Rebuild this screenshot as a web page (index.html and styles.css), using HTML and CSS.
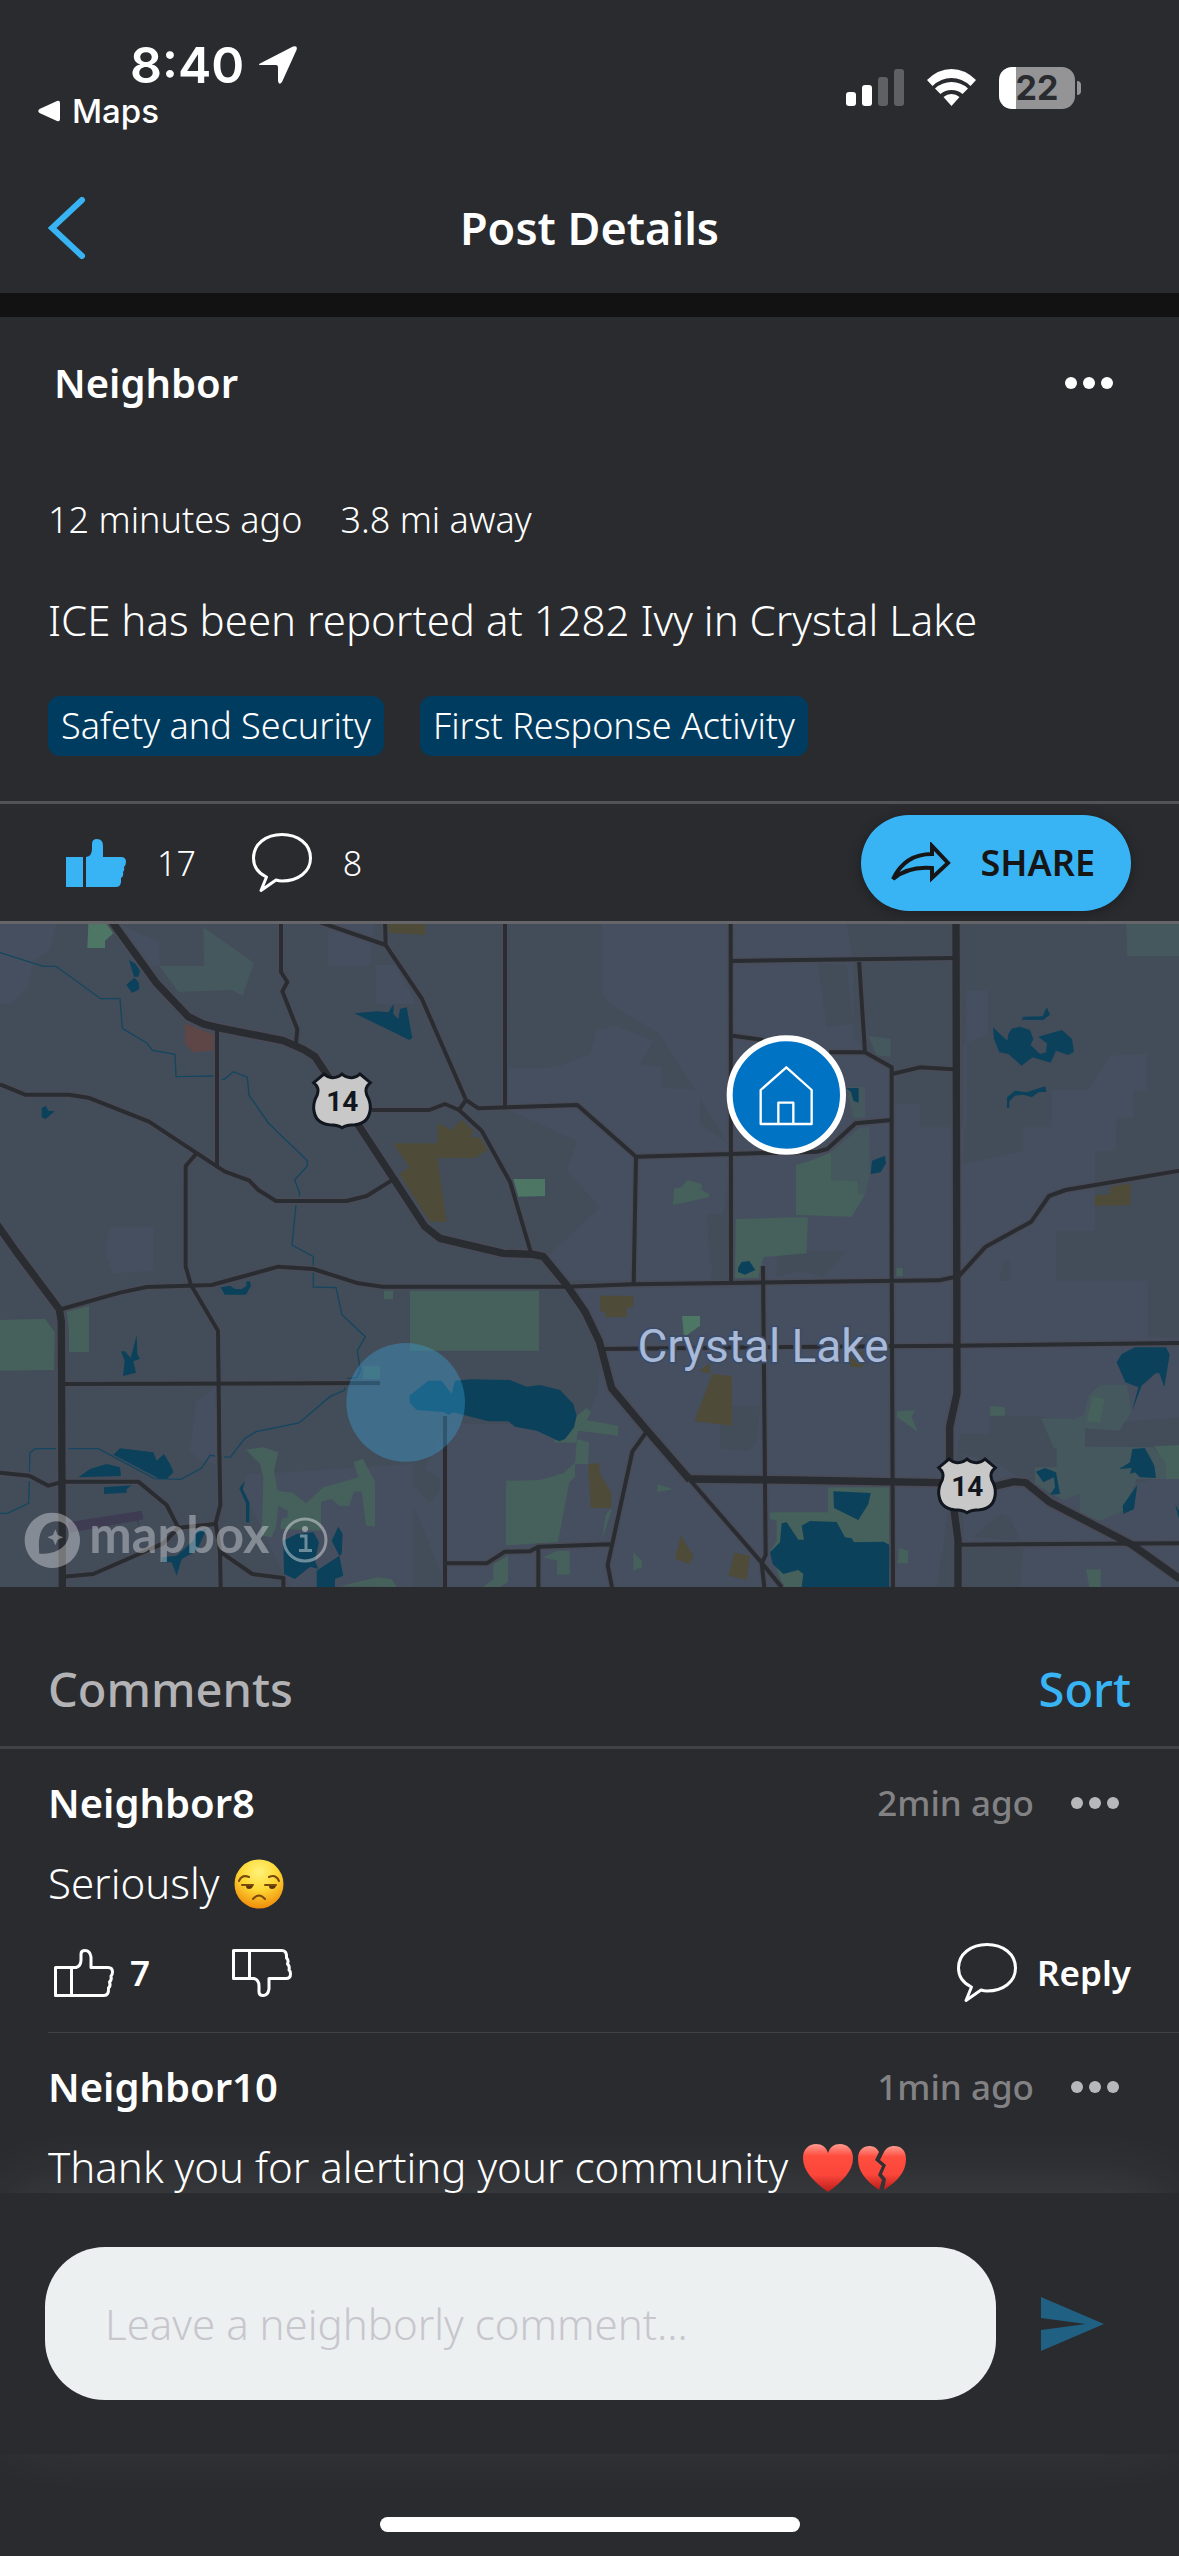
FILE: index.html
```html
<!DOCTYPE html>
<html lang="en">
  <head>
    <meta charset="UTF-8" />
    <meta name="viewport" content="width=device-width, initial-scale=1.0" />
    <title>Post Details</title>
    <link rel="stylesheet" href="styles.css">
  </head>
  <body>
    <!-- shared icons -->
    <svg class="sprite" aria-hidden="true">
      <symbol id="thumb" viewBox="0 0 60 48">
        <path d="M1.5 18.500H17.500V46.500H1.500Z M17.500 18.500H22Q27 17 27 11V5Q27 1.500 31 1.500Q36 1.500 37 8V18.500H54Q58.500 18.500 58.500 23Q58.500 26 57 27Q58 31 55.500 33Q57 37 54.500 39Q55 46.500 50 46.500H17.500"/>
      </symbol>
      <symbol id="bubble" viewBox="0 0 60 60">
        <path d="M30 1.500C46 1.500 58.500 11 58.500 25C58.500 39 46 48 30 48Q27 48 24 47L9 57.500L14.500 44C6 40 1.500 33 1.500 25C1.500 11 14 1.500 30 1.500Z"/>
      </symbol>
      <symbol id="dots" viewBox="0 0 50 14">
        <circle cx="7" cy="7" r="6"/><circle cx="25" cy="7" r="6"/><circle cx="43" cy="7" r="6"/>
      </symbol>
      <symbol id="shield" viewBox="-95 -95 190 190">
        <path d="M-54-78Q-42-66-28-67Q-10-68 0-78Q10-68 28-67Q42-66 54-78L85-52Q66-36 74-16Q86 5 85 25Q82 70 38 74Q14 74 0 83Q-14 74-38 74Q-82 70-85 25Q-86 5-74-16Q-66-36-85-52Z"/>
      </symbol>
    </svg>

    <div class="app">
      <div class="status-bar">
        <div class="status-left">
          <div class="clock">
            <span>8:40</span>
            <svg width="40" height="40" viewBox="0 0 40 40"><path d="M2 18.500L35 1.500Q40 0 38.500 5L24 37Q21 41 20 36V22Q20 20 18 20H4Q-1 20 2 18.500Z"/></svg>
          </div>
          <a class="back-app" href="#maps">
            <svg width="22" height="22" viewBox="0 0 22 22"><path d="M1.500 9L19 1Q22 0 22 3V19Q22 22 19 21L1.500 13Q-1 11 1.500 9Z"/></svg>
            Maps
          </a>
        </div>
        <div class="status-right">
          <svg width="58" height="40" viewBox="0 0 58 40">
            <rect x="0" y="24" width="10" height="14" rx="3"/>
            <rect x="16" y="17" width="10" height="21" rx="3"/>
            <rect class="dim" x="32" y="9" width="10" height="29" rx="3"/>
            <rect class="dim" x="48" y="1" width="10" height="37" rx="3"/>
          </svg>
          <svg width="51" height="40" viewBox="0 0 51 40">
            <path d="M1 12Q12 1 25.500 1T50 12L44.500 18Q36 10 25.500 10T6.500 18Z"/>
            <path d="M9 20.500Q16 14 25.500 14T42 20.500L36.500 26Q32 22 25.500 22T14.500 26Z"/>
            <path d="M17.500 29Q21 26 25.500 26T33.500 29L25.500 38Z"/>
          </svg>
          <div class="battery"><span>22</span></div>
        </div>
      </div>

      <header class="nav">
        <button class="icon-btn" aria-label="Back">
          <svg width="38" height="62" viewBox="0 0 38 62"><path d="M34 3L4 31L34 59"/></svg>
        </button>
        <h1>Post Details</h1>
      </header>

      <main class="content">
        <article class="post">
          <div class="post-header">
            <h2 class="author">Neighbor</h2>
            <button class="icon-btn more" aria-label="Post options"><svg width="50" height="14"><use href="#dots"/></svg></button>
          </div>
          <div class="meta"><span>12 minutes ago</span><span>3.8 mi away</span></div>
          <p class="text">ICE has been reported at 1282 Ivy in Crystal Lake</p>
          <div class="tags"><span class="tag">Safety and Security</span><span class="tag">First Response Activity</span></div>
        </article>

        <div class="post-actions">
          <button class="icon-btn count liked">
            <svg width="60" height="48" viewBox="0 0 60 48"><path d="M0 18H17V48H0Z M20 18Q26 17 26 10V5Q26 0 31 0Q37 0 37 7V18H55Q60 18 60 23Q60 26 58 28Q59 31 57 33Q58 37 55 39Q56 48 50 48H20Z"/></svg>
            <span>17</span>
          </button>
          <button class="icon-btn count">
            <svg class="line" width="60" height="60"><use href="#bubble"/></svg>
            <span>8</span>
          </button>
          <button class="share">
            <svg width="60" height="42" viewBox="0 0 60 42"><path d="M2 37Q14 12 41 12V4L57 21L41 36V26Q17 24 2 37Z"/></svg>
            SHARE
          </button>
        </div>

        <section class="map" aria-label="Map of Crystal Lake">
          <svg class="map-canvas" viewBox="0 0 3537 1989" preserveAspectRatio="xMidYMid slice">
            <!-- built-up areas -->
            <g class="built">
              <path d="M0 0H170L150 80L100 110L85 190L30 240H0Z M360 0L420 30L478 50V125H400Z M985 0H1120L1110 125H985Z M1128 123H1185L1240 220V240H1128Z"/>
              <path d="M330 910H460V1040L340 1048L315 980Z M1806 0H2190V760L2130 1070H1700L1640 1000L1800 850L1700 740L1730 650L1510 550V432H1625L1682 425L1770 390L1790 320L1850 305L1960 350L1920 420L1985 430V490L2100 500V600L2185 660L1980 330L1830 240L1806 210Z"/>
              <path d="M2200 0H2540L2560 110V340L2675 440V1989H1340L1230 1720L1340 1500L1750 1500L1795 1400L1800 1270L1700 1090H2200Z"/>
              <path d="M2687 540H2760V610H2900V200H2964V330L2890 360V720L2940 710L3070 680V610H3155V498H3265L3330 395L3440 390V500H3400V580H3350V680H3285V920H3170V1070H3445V1240H3537V1480L3300 1500L3100 1475H2970V1530H2880L2810 1989H2687Z"/>
              <path d="M2890 1590L3000 1620L3150 1730L3537 1650V1989H3050L3070 1880L2890 1870Z M590 1430L650 1390V1620L600 1610L570 1580Z M740 1650L860 1645L1240 1620V1989H870L730 1700Z"/>
            </g>
            <g class="open">
              <path d="M2455 120H2540L2560 300L2480 310Z M2660 180H2860V420L2680 430Z M2120 870H2190V1040L2130 1020Z M2330 980H2540L2470 1060L2400 1040L2330 1060Z M3010 1010H3030V1070H2998Z M2160 1445H2280L2270 1560L2240 1580L2160 1575Z M2920 1840L3000 1770L3030 1780L3060 1850Z M2890 1870H3070L3060 1989H2930Z M1250 1625L1320 1660V1700L1290 1740L1248 1690Z"/>
            </g>
            <!-- parks -->
            <g class="park">
              <path class="soft" d="M610 10L762 116L728 215L695 198L535 204L478 126H612Z"/>
              <path class="bright" d="M262 72L265 0H320L340 28L315 50V72Z M1540 765H1635V816L1555 818Z M2046 1176H2100V1205L2052 1240Z"/>
              <path d="M2019 843L2022 793L2045 790L2062 768L2105 780V797L2127 810V820Z"/>
              <path d="M2207 885L2390 880H2424L2420 988L2290 1000L2275 1062H2205Z M2388 723L2430 710L2495 685V768L2572 770L2578 808L2595 812L2555 878L2388 873Z"/>
              <path class="soft" d="M2495 683L2580 610L2607 610L2610 750L2595 812H2575V768H2495Z M2545 490H2595V580L2560 582L2540 500Z M2605 336L2672 345V398L2630 394Z M3378 0H3537V96H3382Z"/>
              <path d="M0 1188L135 1184L164 1225L162 1338L0 1340Z M200 1163L267 1145V1284H207V1220Z M1152 1100H1179V1125H1152Z M1090 1325H1140V1365H1090Z M1230 1100H1617V1280H1230Z"/>
              <path d="M738 1577L790 1570L835 1585L822 1640L833 1700L878 1706L918 1738L970 1690L1075 1660L1060 1615L1088 1604L1125 1672V1808L1098 1805L1085 1703H1062L1048 1746H1020L993 1725L963 1735V1820L840 1815L845 1785L863 1780V1760L835 1745L828 1810L815 1840L785 1835L790 1660L780 1620Z M1020 1987L1130 1960L1175 1965L1190 1989Z"/>
              <path d="M1518 1670L1620 1668L1690 1648L1725 1615V1660L1708 1675L1674 1855L1518 1864Z M1730 1545L1767 1555L1765 1620H1725Z M1660 1555L1730 1475L1760 1452L1773 1465L1760 1488L1854 1505V1535L1735 1520L1728 1556Z M1838 1750L1805 1848L1818 1770Z M1480 1920L1524 1895V1975L1500 1989H1450L1480 1965Z M1630 1900L1671 1880H1709V1952H1671V1910Z M1900 1885L1926 1910V1930L1900 1940Z M1972 1680L2020 1696L1972 1704Z"/>
              <path d="M2310 1765H2484V1690H2667V1870L2670 1989H2350L2310 1880L2330 1850V1790L2310 1785Z M2689 1032H2708V1056H2689Z M2691 1462L2745 1458L2735 1480L2754 1524L2691 1480Z M2697 1872L2724 1880V1918H2693Z M3258 1936H3302V1989H3268Z M2970 1446L3015 1450V1475H2970Z M3462 1567L3537 1563V1665H3497L3495 1620Z"/>
              <path class="soft" d="M3123 1482L3225 1485L3255 1470L3265 1415L3300 1382H3380L3396 1462L3358 1520L3255 1513V1568L3460 1570L3498 1620V1665H3410L3370 1760L3300 1790L3240 1770L3240 1710L3190 1728L3105 1680V1630H3170V1575L3160 1570Z"/>
              <path d="M3278 1415L3314 1425L3300 1496L3260 1492Z"/>
            </g>
            <path class="red" d="M555 298L610 320L640 330V380L578 384L555 360Z"/>
            <path class="purple" d="M205 1795L425 1760L430 1785L415 1790L420 1815L410 1790L210 1826Z"/>
            <g class="olive">
              <path d="M1165 0H1276V33L1165 26Z M1178 658H1313V598L1355 618L1385 587L1420 620L1412 640L1440 640L1463 678L1425 702H1312L1340 893H1290L1198 750L1228 728Z"/>
              <path d="M1800 1115H1900V1147L1880 1153V1180H1815V1163L1800 1162Z M2097 1340L2130 1318V1350Z M2137 1350L2194 1356L2196 1505L2083 1492Z M1765 1620L1797 1617L1800 1650L1834 1705V1752H1772Z M2042 1835L2081 1895L2068 1920L2025 1905Z M2203 1886L2250 1895L2240 1967L2185 1955Z"/>
              <path d="M3284 815L3330 810L3332 788L3392 778V843L3284 846Z M2555 1290L2590 1280V1330L2550 1328Z"/>
            </g>
            <!-- rivers and lakes -->
            <g class="stream">
              <path d="M0 86L130 127H168L302 224H360L367 313L440 357L458 379L525 391L528 458L640 456 M665 466H673L700 443L742 460L747 513L805 597L922 710V726L884 768L899 808L897 818 M888 843L876 963L940 998V1089L1008 1091L1026 1172L1096 1238L1072 1280L1081 1340L1070 1360L1042 1364"/>
              <path d="M1034 1390V1398L990 1418L897 1497L768 1523L735 1543L690 1600L672 1598 M645 1596L630 1594L605 1632L543 1666L463 1664L295 1574H205 M168 1574H105L90 1586L88 1643 M88 1671L86 1738L22 1768H0"/>
            </g>
            <g class="water">
              <path d="M387 108L405 118L420 140L415 158H402Z M379 182L403 161L416 175L418 196L396 207Z M125 552L137 545L145 560L164 562L137 585L125 580Z M1063 268L1130 262L1165 265L1181 240L1180 270L1195 285L1200 255L1220 250L1237 342L1228 348L1150 310Z"/>
              <path d="M1228 1415L1285 1370H1325L1355 1410L1365 1370L1415 1366L1530 1368L1580 1388L1620 1383L1680 1398L1720 1440L1730 1475L1722 1510L1695 1545L1678 1552L1610 1520L1545 1508L1525 1492H1465L1360 1465L1345 1472L1330 1464L1250 1458L1230 1436Z"/>
              <path d="M662 1090L690 1085L705 1095L725 1095L740 1085L738 1073L750 1072L753 1085L738 1112H674Z M410 1233L412 1290L420 1304L400 1312L408 1346L369 1356L374 1310L363 1282L375 1282L392 1302Z M340 1592L360 1573L460 1585L470 1610L492 1590L510 1620L521 1645L500 1664H478Z M235 1660L270 1635L320 1620L360 1630L363 1656Z M312 1690L395 1684L380 1695V1706L312 1710Z M735 1670L728 1695L748 1735V1795H738V1738L718 1693Z"/>
              <path d="M850 1850L890 1830L940 1825L957 1855L945 1910L955 1935L930 1928L885 1965L852 1950Z M950 1940L1018 1895L1030 1955L1005 1965V1989H950Z M1015 1808L1028 1830L1025 1890L1018 1895L995 1850Z M485 1900L530 1895L580 1850L590 1820L620 1815L590 1880L545 1905L530 1955L515 1915H485Z"/>
              <path d="M2979 310L3000 330L3022 350L3025 330L3035 314L3060 308L3090 318L3100 345L3092 363L3120 390L3138 385L3141 358L3114 338L3186 318L3216 345L3222 383L3205 393L3168 380L3152 416L3098 400L3065 425L3025 390L2998 385L2982 345Z M3065 287L3070 278L3128 277L3140 250L3150 272L3130 288Z M3021 552V520L3045 500L3080 505L3135 487L3140 503L3115 505L3095 520L3070 512L3045 515L3028 532V552Z M2538 492H2576V536L2560 530L2553 503Z M2616 710L2655 695L2658 718L2642 745L2612 750Z M2214 1032L2225 1014L2248 1011L2266 1038L2235 1052L2214 1044Z"/>
              <path d="M2500 1702L2612 1707L2605 1740L2575 1788L2502 1752Z M2345 1798L2360 1795L2395 1847H2412L2405 1805L2430 1791L2510 1794L2535 1840L2555 1843L2562 1855L2650 1853L2668 1862V1989H2405L2410 1950L2395 1938L2350 1950L2318 1920L2310 1885L2340 1855Z"/>
              <path d="M3350 1315L3365 1290L3405 1270H3498L3509 1292L3493 1390L3478 1348H3467L3425 1385L3396 1462L3415 1390L3376 1375Z M3357 1635L3390 1615L3397 1575L3434 1572L3450 1600L3463 1625L3468 1662L3420 1660L3405 1645L3390 1650L3395 1632Z M3412 1682L3402 1755L3370 1770L3368 1745Z M3108 1643L3135 1632L3168 1645L3180 1710L3150 1712L3165 1690L3162 1660L3130 1675Z M3526 1742L3537 1760V1785Z"/>
            </g>
            <!-- roads: halo pass, then surface -->
            <defs>
              <g id="roads">
                <path d="M0 481L75 512H207L265 521L447 593L655 730L675 743L747 769L775 798L828 831H1040L1100 816L1180 766 M651 310V730 M588 690L557 726V1028L573 1083L654 1220L658 1578L661 1743L647 1798L660 1883L662 1990"/>
                <path d="M843-12V144L862 174L847 202L892 316L888 358 M940-12L1157 63L1155-12 M1157 63L1170 83L1265 223L1398 528L1435 553L1732 543L1908 698L2192 690L2452 683L2482 675L2567 598L2677 588 M1908 698L1901 1078 M1115 558H1288L1335 540L1377 558L1398 528 M1377 558L1445 620L1530 773L1592 983 M1515-12V550 M2192-12L2193 1076"/>
                <path d="M2192 111L2862 102 M2198 335L2290 348 M2487 385H2595L2577 108 M2595 385L2675 430V1008L2679 1990 M2677 450L2759 430L2859 436 M3540 740L3197 798L3147 816L3094 893L2957 968L2877 1056L2817 1069L2337 1075L1900 1081L1700 1088H1148L1075 1078L940 1035L835 1028L635 1083L440 1089L360 1106L185 1155"/>
                <path d="M1810 1275L2370 1269L2867 1265L3540 1257 M2289 1026L2295 1678L2297 1893L2285 1918L2293 1990 M2070 1668L2285 1916L2345 1990 M1940 1523L1897 1583L1823 1923L1836 1990 M1830 1861L1615 1868L1590 1882L1515 1883L1460 1918H1335 M1335 1476V1990 M1615 1868V1990 M190 1380L1140 1377"/>
                <path d="M0 1646L88 1655L145 1685L190 1673H415L500 1743L535 1811L645 1800 M535 1811L490 1858L280 1950L190 1958 M660 1883L757 1950L850 1962V1990 M2877 1862L3540 1858"/>
              </g>
              <g id="highways">
                <path d="M330-15L470 178L565 278L610 300L650 310L850 350L910 376L945 398L985 458L1075 603L1170 748L1275 908L1320 943L1510 988L1600 991L1630 998L1700 1083L1755 1163L1798 1253L1835 1393L1940 1518L2070 1668"/>
                <path d="M2070 1665L2370 1668L2817 1676L2987 1686L3042 1673L3077 1676L3147 1733L3397 1863L3540 1965 M2868-10L2871 1408L2849 1508V1618L2862 1758L2874 1848V1990 M-10 900L45 978L178 1156L184 1193L187 1990"/>
              </g>
            </defs>
            <use class="halo" href="#roads"/>
            <use class="halo wide" href="#highways"/>
            <use class="road" href="#roads"/>
            <use class="road wide" href="#highways"/>

            <text class="city" x="2289" y="1315">Crystal Lake</text>
            <g class="route">
              <use href="#shield" x="931" y="433" width="190" height="190"/>
              <text x="1027" y="560">14</text>
              <use href="#shield" x="2806" y="1588" width="190" height="190"/>
              <text x="2902" y="1715">14</text>
            </g>
            <circle class="area" cx="1217" cy="1435" r="178"/>
            <g class="home">
              <circle cx="2359" cy="513" r="170"/>
              <path d="M2282 498L2359 430L2435 498V600H2282Z M2335 600V536H2380V600"/>
            </g>
            <!-- attribution -->
            <g class="brand">
              <path fill-rule="evenodd" d="M157 1766A83 83 0 1 1 156.900 1766Z M118 1889C112 1830 125 1795 168 1792C192 1792 206 1805 206 1830C206 1870 165 1892 118 1889Z"/>
              <path d="M166 1816L173 1833L190 1840L173 1847L166 1864L159 1847L142 1840L159 1833Z"/>
              <text x="268" y="1886">mapbox</text>
            </g>
          </svg>
          <button class="info" aria-label="Map information">
            <svg width="46" height="46" viewBox="0 0 46 46"><circle cx="23" cy="23" r="21"/><path d="M18 19H24V33 M17 33.500H30"/><circle class="tittle" cx="23" cy="12" r="3"/></svg>
          </button>
        </section>

        <section class="comments">
          <div class="comments-header">
            <h2>Comments</h2>
            <button class="sort">Sort</button>
          </div>

          <article class="comment">
            <div class="comment-header">
              <h3 class="author">Neighbor8</h3>
              <span class="time">2min ago</span>
              <button class="icon-btn more" aria-label="Comment options"><svg width="50" height="14"><use href="#dots"/></svg></button>
            </div>
            <p class="text">Seriously
              <svg class="emoji" viewBox="0 0 50 50" role="img" aria-label="unamused face">
                <defs><radialGradient id="face" cx=".5" cy=".25" r=".75"><stop offset="0" stop-color="#fff27a"/><stop offset=".5" stop-color="#fdd835"/><stop offset="1" stop-color="#f08c0a"/></radialGradient></defs>
                <circle cx="25" cy="25" r="24.500" fill="url(#face)"/>
                <path d="M5 22Q8 15 15 18 M35 18Q42 15 45 22 M8 26H19 M31 26H42 M19 40Q25 33 31 40" fill="none" stroke="#7a4a0c" stroke-width="2" stroke-linecap="round"/>
                <path d="M12 27H19Q18 30 15 30T12 27Z M35 27H42Q41 30 38 30T35 27Z" fill="#5c3608"/>
              </svg>
            </p>
            <div class="comment-actions">
              <button class="icon-btn vote"><svg class="line" width="60" height="48"><use href="#thumb"/></svg><span>7</span></button>
              <button class="icon-btn vote down" aria-label="Dislike"><svg class="line" width="60" height="48"><use href="#thumb"/></svg></button>
              <button class="icon-btn reply"><svg class="line" width="60" height="60"><use href="#bubble"/></svg><span>Reply</span></button>
            </div>
          </article>

          <article class="comment">
            <div class="comment-header">
              <h3 class="author">Neighbor10</h3>
              <span class="time">1min ago</span>
              <button class="icon-btn more" aria-label="Comment options"><svg width="50" height="14"><use href="#dots"/></svg></button>
            </div>
            <p class="text">Thank you for alerting your community
              <svg class="emoji" viewBox="0 0 50 50" role="img" aria-label="red heart">
                <defs><linearGradient id="heart" x2="0" y2="1"><stop offset="0" stop-color="#ff9a90"/><stop offset=".25" stop-color="#ff4a3c"/><stop offset=".65" stop-color="#fb3f33"/><stop offset="1" stop-color="#b80f0f"/></linearGradient></defs>
                <path d="M25 49C10 38 0 28 0 15C0 6 6 1 13 1C19 1 23 4 25 10C27 4 31 1 37 1C44 1 50 6 50 15C50 28 40 38 25 49Z" fill="url(#heart)"/>
              </svg><svg class="emoji" viewBox="0 0 50 50" role="img" aria-label="broken heart">
                <path d="M22 47C8 37 1 28 1 16C1 7 6 3 13 3C17 3 20 5 22 9L18 17L25 23L21 32L25 37Z M27 47L29 36L25 31L29 22L23 17L27 9C29 5 33 3 37 3C44 3 49 7 49 16C49 28 42 37 27 47Z" fill="url(#heart)"/>
              </svg>
            </p>
          </article>
        </section>
      </main>

      <footer class="footer">
        <form class="composer">
          <input type="text" aria-label="Comment" placeholder="Leave a neighborly comment…" />
          <button type="button" class="icon-btn send" aria-label="Send">
            <svg width="63" height="54" viewBox="0 0 63 54"><path d="M0 0L63 27L0 54V33L45 27L0 21Z"/></svg>
          </button>
        </form>
        <div class="home-indicator"></div>
      </footer>
    </div>
  </body>
</html>
```

FILE: styles.css
```css
* {
  margin: 0;
  padding: 0;
  box-sizing: border-box;
}

body {
  background-color: #292b2f;
  color: white;
  font-family: "Noto Sans", sans-serif;
  font-size: 42px;
  line-height: 56px;
}

button,
input {
  font: inherit;
  color: inherit;
  border: none;
  background: none;
}

button {
  cursor: pointer;
}

svg {
  display: block;
  fill: currentColor;
}

.sprite {
  position: absolute;
  width: 0;
  height: 0;
}

.app {
  height: 100vh;
  display: flex;
  flex-direction: column;
}

/* status bar */
.status-bar {
  flex: none;
  height: 162px;
  padding: 37px 98px 0 38px;
  display: flex;
  justify-content: space-between;
  font-family: Inter, sans-serif;
}

.clock {
  display: flex;
  align-items: center;
  gap: 14px;
  padding-left: 92px;
  font-size: 50px;
  font-weight: 600;
}

.back-app {
  display: flex;
  align-items: center;
  gap: 12px;
  color: white;
  font-size: 33px;
  font-weight: 500;
  line-height: 36px;
  text-decoration: none;
}

.status-right {
  height: 102px;
  display: flex;
  align-items: center;
  gap: 22px;
}

.dim {
  opacity: 0.25;
}

.battery {
  position: relative;
  width: 76px;
  height: 42px;
  margin-right: 6px;
  border-radius: 13px;
  background: linear-gradient(to right, white 22%, #949496 22%);
  color: #292b2f;
  font-size: 34px;
  font-weight: 700;
  line-height: 42px;
  text-align: center;
}

.battery::after {
  content: "";
  position: absolute;
  top: 14px;
  left: 78px;
  width: 4px;
  height: 14px;
  border-radius: 0 4px 4px 0;
  background-color: #949496;
}

/* nav */
.nav {
  flex: none;
  height: 155px;
  padding: 0 48px;
  border-bottom: 24px solid #121212;
  display: grid;
  grid-template-columns: 1fr auto 1fr;
  align-items: center;
}

.nav path {
  fill: none;
  stroke: #38b4f5;
  stroke-width: 6;
  stroke-linecap: round;
}

h1 {
  font-size: 45px;
  font-weight: 600;
}

.icon-btn {
  display: flex;
  align-items: center;
}

.content {
  flex: 1;
  min-height: 0;
  overflow: hidden;
}

/* post */
.post {
  padding: 0 48px 45px;
}

.post-header {
  height: 132px;
  padding: 0 17px 0 6px;
  display: flex;
  align-items: center;
  justify-content: space-between;
}

.author {
  font-size: 40px;
  font-weight: 600;
}

.meta {
  display: flex;
  gap: 38px;
  margin-top: 47px;
  font-size: 36px;
  font-weight: 300;
  line-height: 48px;
}

.text {
  font-weight: 300;
}

.post .text {
  margin: 48px 0;
}

.tags {
  display: flex;
  gap: 36px;
}

.tag {
  padding: 0 13px;
  border-radius: 12px;
  background-color: #003c60;
  font-size: 36px;
  font-weight: 300;
  line-height: 60px;
}

.post-actions {
  height: 123px;
  padding: 0 48px 0 66px;
  border-top: 3px solid #525357;
  border-bottom: 3px solid #66666a;
  display: flex;
  align-items: center;
  gap: 56px;
}

.count {
  gap: 31px;
  font-size: 34px;
  font-weight: 300;
}

.liked svg {
  color: #38b4f5;
}

.line {
  fill: none;
  stroke: white;
  stroke-width: 3;
  stroke-linejoin: round;
}

.share {
  height: 96px;
  margin-left: auto;
  padding: 0 36px 0 30px;
  border-radius: 48px;
  background-color: #38b4f5;
  box-shadow: 0 2px 12px rgba(0, 0, 0, 0.3);
  color: #161616;
  font-size: 36px;
  font-weight: 600;
  display: flex;
  align-items: center;
  gap: 30px;
}

.share path {
  fill: none;
  stroke: #161616;
  stroke-width: 4;
}

/* map */
.map {
  position: relative;
  height: 663px;
  background-color: #434d5a;
}

.map-canvas {
  width: 100%;
  height: 100%;
}

.built {
  fill: #464f5f;
}

.open {
  fill: #434d5a;
}

.park {
  fill: #46605b;
}

.park .soft {
  fill: #45585d;
}

.park .bright {
  fill: #4d7664;
}

.red {
  fill: #5f4646;
}

.purple {
  fill: #3d3c53;
}

.olive {
  fill: #4e4c39;
}

.water {
  fill: #0b415b;
}

.stream {
  fill: none;
  stroke: #14465f;
  stroke-width: 4;
}

.halo,
.road {
  fill: none;
  stroke-linejoin: round;
}

.halo {
  stroke: #4a4b57;
  stroke-width: 20;
}

.halo.wide {
  stroke-width: 32;
}

.road {
  stroke: #292c30;
  stroke-width: 12;
}

.road.wide {
  stroke-width: 22;
}

.city {
  fill: #a9bad8;
  font-family: Roboto, sans-serif;
  font-size: 138px;
  font-weight: 400;
  text-anchor: middle;
  paint-order: stroke;
  stroke: #3d4c66;
  stroke-width: 12;
}

.route use {
  fill: #c8c8c8;
  stroke: #12161f;
  stroke-width: 9;
}

.route text {
  fill: #12161f;
  font-family: Roboto, sans-serif;
  font-size: 84px;
  font-weight: 700;
  text-anchor: middle;
}

.area {
  fill: #38a9e6;
  opacity: 0.35;
}

.home circle {
  fill: #0073c5;
  stroke: white;
  stroke-width: 18;
}

.home path {
  fill: none;
  stroke: white;
  stroke-width: 7;
  stroke-linejoin: round;
}

.brand {
  opacity: 0.35;
}

.brand text {
  font-family: Lato, sans-serif;
  font-size: 152px;
  font-weight: 700;
}

.info {
  position: absolute;
  left: 282px;
  bottom: 24px;
  opacity: 0.4;
}

.info svg {
  fill: none;
  stroke: white;
  stroke-width: 3;
}

.info .tittle {
  fill: white;
  stroke: none;
}

/* comments */
.comments-header {
  padding: 72px 48px 27px;
  border-bottom: 3px solid #404247;
  display: flex;
  justify-content: space-between;
  font-size: 47px;
  line-height: 60px;
}

.comments-header h2 {
  color: #b3b3b5;
  font-size: 47px;
  font-weight: 500;
}

.sort {
  color: #38b4f5;
  font-weight: 500;
}

.comment {
  margin-left: 48px;
  padding: 26px 48px 29px 0;
  border-bottom: 1px solid #404247;
}

.comment-header {
  display: flex;
  align-items: center;
  padding-right: 11px;
}

.time {
  margin-left: auto;
  margin-right: 36px;
  color: #828284;
  font-size: 35px;
  font-weight: 500;
}

.comment .more {
  color: #b8b8ba;
}

.comment .text {
  margin-top: 26px;
  line-height: 52px;
}

.emoji {
  display: inline-block;
  width: 50px;
  height: 50px;
  margin-left: 4px;
  vertical-align: -10px;
}

.comment-actions {
  display: flex;
  align-items: center;
  margin-top: 34px;
  height: 60px;
  padding-left: 6px;
  gap: 82px;
  font-size: 35px;
  font-weight: 600;
}

.vote {
  gap: 16px;
}

.down svg {
  transform: scaleY(-1);
}

.reply {
  gap: 20px;
  margin-left: auto;
}

/* composer */
.footer {
  flex: none;
  height: 363px;
  position: relative;
  background-color: #292b2f;
}

.composer {
  height: 261px;
  padding: 0 75px 0 45px;
  background-color: #292b2f;
  box-shadow: 0 -12px 70px -10px rgba(255, 255, 240, 0.12);
  display: flex;
  align-items: center;
  gap: 45px;
}

.composer input {
  flex: 1;
  min-width: 0;
  height: 153px;
  padding: 0 60px;
  border-radius: 60px;
  background-color: #ecf0f1;
  color: #292b2f;
  font-weight: 300;
}

.composer input::placeholder {
  color: #c8c6cd;
  opacity: 1;
}

.send {
  color: #1f6083;
}

.home-indicator {
  width: 420px;
  max-width: 60%;
  height: 15px;
  margin: 63px auto 0;
  border-radius: 8px;
  background-color: white;
}
```
